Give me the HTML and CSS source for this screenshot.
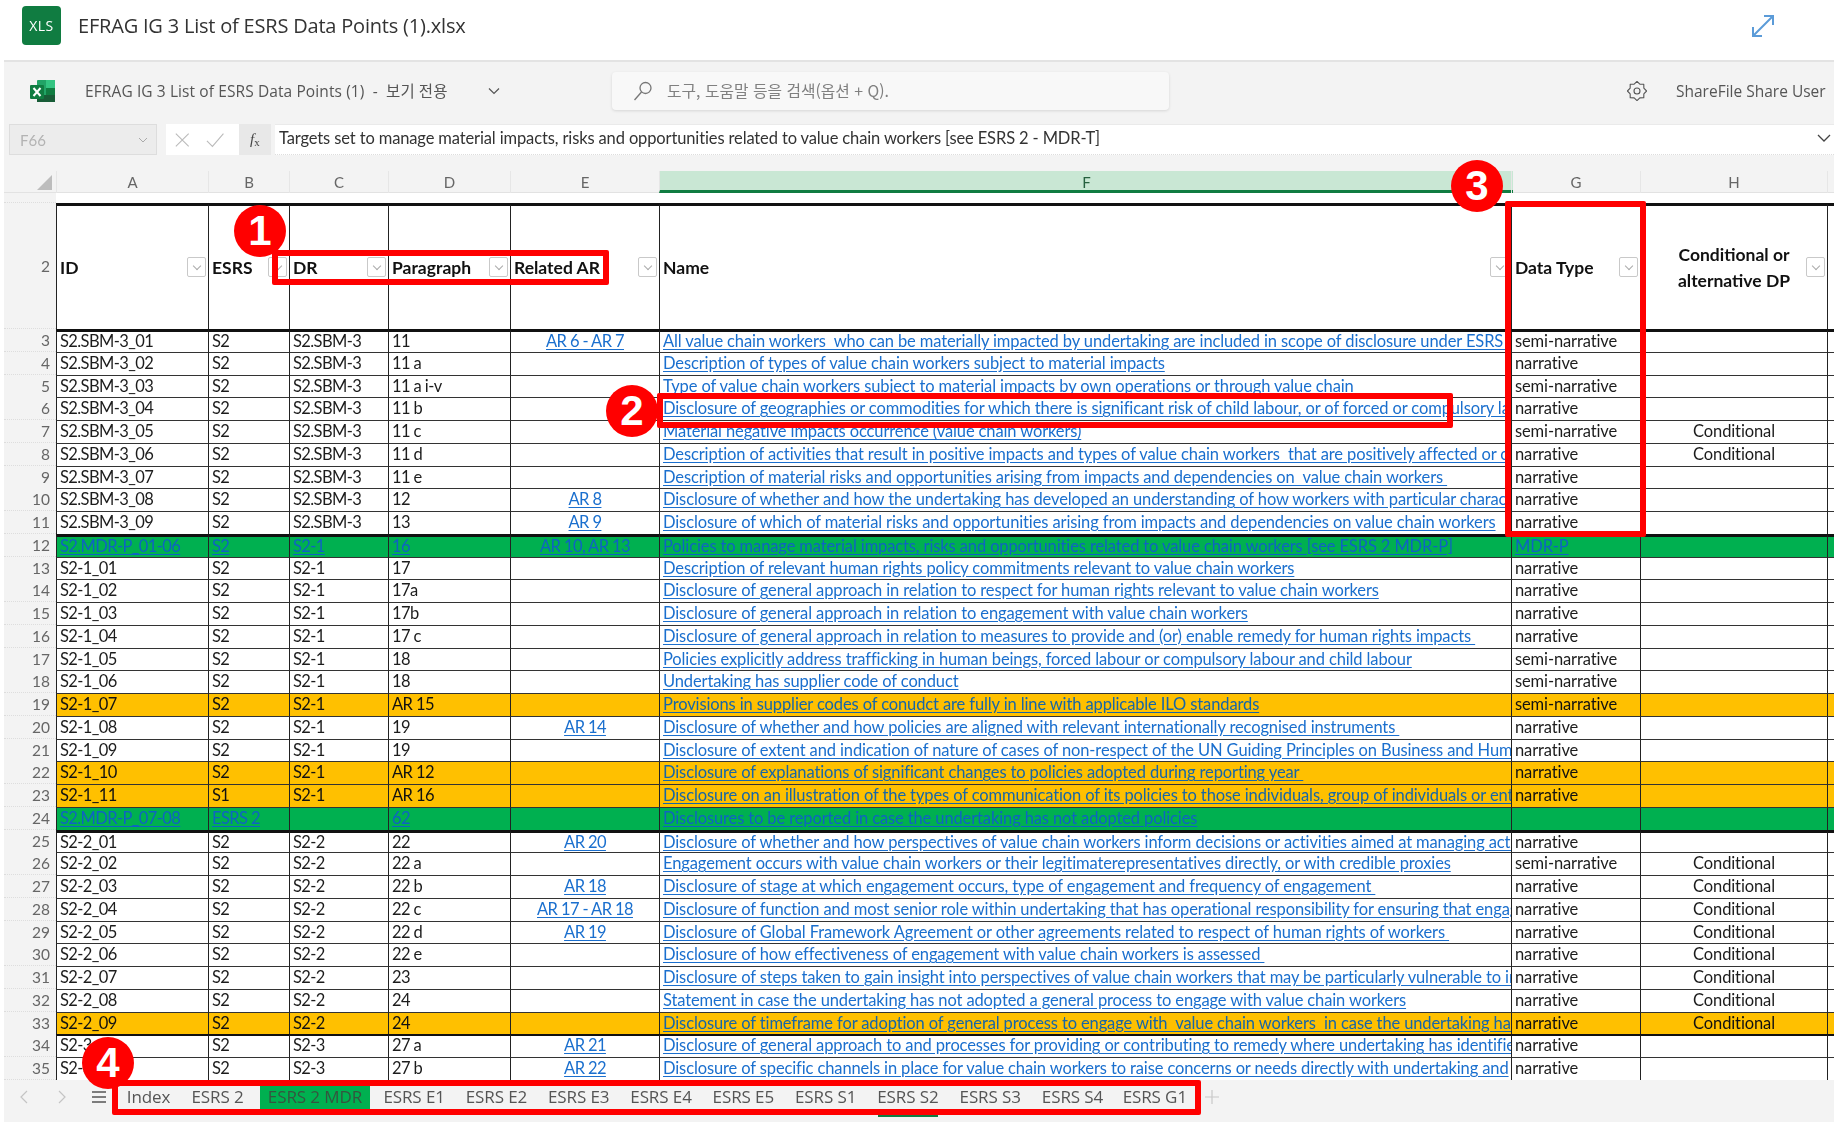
FILE: index.html
```html
<!DOCTYPE html>
<html lang="ko">
<head>
<meta charset="utf-8">
<title>EFRAG IG 3 List of ESRS Data Points (1).xlsx</title>
<link rel="stylesheet" href="styles.css">
</head>
<body>
<div class="app">
  <header class="title">
    <div class="xls">XLS</div>
    <h1>EFRAG IG 3 List of ESRS Data Points (1).xlsx</h1>
    <svg class="expand" width="24" height="24" viewBox="0 0 24 24" fill="none" stroke="#5b9bd8" stroke-width="2"><path d="M2 22 22 2M13 2h9v9M2 13v9h9"/></svg>
  </header>
  <div class="toolbar">
    <svg class="xl" width="26" height="24" viewBox="0 0 26 24"><rect x="7" y="1" width="18" height="22" rx="1" fill="#21a366"/><rect x="16" y="1" width="9" height="8" fill="#33c481"/><rect x="16" y="9" width="9" height="7" fill="#107c41"/><rect x="7" y="16" width="18" height="7" fill="#185c37"/><rect x="0" y="6" width="14" height="14" rx="1" fill="#107c41"/><path d="M3.5 9 10.500 17M10.500 9 3.500 17" stroke="#fff" stroke-width="2"/></svg>
    <span class="doc">EFRAG IG 3 List of ESRS Data Points (1)&nbsp; -&nbsp; 보기 전용</span>
    <svg class="caret" width="12" height="8" viewBox="0 0 12 8" fill="none" stroke="#555" stroke-width="1.200"><path d="M1 1.500 6 6.500 11 1.500"/></svg>
    <div class="search">
      <svg width="20" height="20" viewBox="0 0 20 20" fill="none" stroke="#777" stroke-width="1.300"><circle cx="12.500" cy="7" r="5.500"/><path d="M8.500 11 1.500 19"/></svg>
      <span>도구, 도움말 등을 검색(옵션 + Q).</span>
    </div>
    <svg class="gear" width="20" height="20" viewBox="0 0 20 20" fill="none" stroke="#555" stroke-width="1.100" stroke-linejoin="round"><path d="M19.600 10 16.840 12.830 16.790 16.790 12.830 16.840 10 19.600 7.170 16.840 3.210 16.790 3.160 12.830.4 10 3.160 7.170 3.210 3.210 7.170 3.160 10 .4 12.830 3.160 16.790 3.210 16.840 7.170Z"/><circle cx="10" cy="10" r="3"/></svg>
    <span class="user">ShareFile Share User</span>
  </div>
  <div class="formula">
    <div class="namebox"><span>F66</span><svg width="10" height="6" viewBox="0 0 10 6" fill="none" stroke="#aaa"><path d="M1 1 5 5 9 1"/></svg></div>
    <div class="fbtns">
      <svg width="18" height="18" viewBox="0 0 18 18" fill="none" stroke="#bbb" stroke-width="1.200"><path d="M2 2 16 16M16 2 2 16"/></svg>
      <svg width="20" height="18" viewBox="0 0 20 18" fill="none" stroke="#bbb" stroke-width="1.200"><path d="M1 10 7 16 19 2"/></svg>
      <span class="fx"><i>f</i><small>x</small></span>
    </div>
    <div class="finput"><span>Targets set to manage material impacts, risks and opportunities related to value chain workers [see ESRS 2 - MDR-T]</span>
      <svg width="14" height="8" viewBox="0 0 14 8" fill="none" stroke="#444" stroke-width="1.300"><path d="M1 1 7 7 13 1"/></svg></div>
  </div>
  <main class="sheet">
    <div class="grid colhead">
      <span class="corner"></span><span>A</span><span>B</span><span>C</span><span>D</span><span>E</span><span class="sel">F</span><span>G</span><span>H</span><span></span>
    </div>
    <div class="grid row1"><span class="rh"></span><span></span><span></span><span></span><span></span><span></span><span></span><span></span><span></span><span></span></div>
    <div class="grid row2">
      <span class="rh">2</span>
      <span class="c"><b>ID</b><u class="fb"></u></span>
      <span class="c"><b>ESRS</b><u class="fb"></u></span>
      <span class="c"><b>DR</b><u class="fb"></u></span>
      <span class="c"><b>Paragraph</b><u class="fb"></u></span>
      <span class="c"><b>Related AR</b><u class="fb"></u></span>
      <span class="c"><b>Name</b><u class="fb"></u></span>
      <span class="c"><b>Data Type</b><u class="fb"></u></span>
      <span class="c hc"><b>Conditional or<br>alternative DP</b><u class="fb"></u></span>
      <span class="c"></span>
    </div>
    <div class="grid row thick"><span class="rh">3</span><span class="c">S2.SBM-3_01</span><span class="c">S2</span><span class="c">S2.SBM-3</span><span class="c">11</span><span class="c m"><a>AR 6 - AR 7</a></span><span class="c"><a>All value chain workers  who can be materially impacted by undertaking are included in scope of disclosure under ESRS 2</a></span><span class="c">semi-narrative</span><span class="c m"></span><span class="c"></span></div>
    <div class="grid row"><span class="rh">4</span><span class="c">S2.SBM-3_02</span><span class="c">S2</span><span class="c">S2.SBM-3</span><span class="c">11 a</span><span class="c m"></span><span class="c"><a>Description of types of value chain workers subject to material impacts</a></span><span class="c">narrative</span><span class="c m"></span><span class="c"></span></div>
    <div class="grid row"><span class="rh">5</span><span class="c">S2.SBM-3_03</span><span class="c">S2</span><span class="c">S2.SBM-3</span><span class="c">11 a i-v</span><span class="c m"></span><span class="c"><a>Type of value chain workers subject to material impacts by own operations or through value chain</a></span><span class="c">semi-narrative</span><span class="c m"></span><span class="c"></span></div>
    <div class="grid row"><span class="rh">6</span><span class="c">S2.SBM-3_04</span><span class="c">S2</span><span class="c">S2.SBM-3</span><span class="c">11 b</span><span class="c m"></span><span class="c"><a>Disclosure of geographies or commodities for which there is significant risk of child labour, or of forced or compulsory labour</a></span><span class="c">narrative</span><span class="c m"></span><span class="c"></span></div>
    <div class="grid row"><span class="rh">7</span><span class="c">S2.SBM-3_05</span><span class="c">S2</span><span class="c">S2.SBM-3</span><span class="c">11 c</span><span class="c m"></span><span class="c"><a>Material negative impacts occurrence (value chain workers)</a></span><span class="c">semi-narrative</span><span class="c m">Conditional</span><span class="c"></span></div>
    <div class="grid row"><span class="rh">8</span><span class="c">S2.SBM-3_06</span><span class="c">S2</span><span class="c">S2.SBM-3</span><span class="c">11 d</span><span class="c m"></span><span class="c"><a>Description of activities that result in positive impacts and types of value chain workers  that are positively affected or could be</a></span><span class="c">narrative</span><span class="c m">Conditional</span><span class="c"></span></div>
    <div class="grid row"><span class="rh">9</span><span class="c">S2.SBM-3_07</span><span class="c">S2</span><span class="c">S2.SBM-3</span><span class="c">11 e</span><span class="c m"></span><span class="c"><a>Description of material risks and opportunities arising from impacts and dependencies on  value chain workers </a></span><span class="c">narrative</span><span class="c m"></span><span class="c"></span></div>
    <div class="grid row"><span class="rh">10</span><span class="c">S2.SBM-3_08</span><span class="c">S2</span><span class="c">S2.SBM-3</span><span class="c">12</span><span class="c m"><a>AR 8</a></span><span class="c"><a>Disclosure of whether and how the undertaking has developed an understanding of how workers with particular characteristics</a></span><span class="c">narrative</span><span class="c m"></span><span class="c"></span></div>
    <div class="grid row"><span class="rh">11</span><span class="c">S2.SBM-3_09</span><span class="c">S2</span><span class="c">S2.SBM-3</span><span class="c">13</span><span class="c m"><a>AR 9</a></span><span class="c"><a>Disclosure of which of material risks and opportunities arising from impacts and dependencies on value chain workers</a></span><span class="c">narrative</span><span class="c m"></span><span class="c"></span></div>
    <div class="grid row g thick"><span class="rh">12</span><span class="c"><a>S2.MDR-P_01-06</a></span><span class="c"><a>S2</a></span><span class="c"><a>S2-1</a></span><span class="c"><a>16</a></span><span class="c m"><a>AR 10, AR 13</a></span><span class="c"><a>Policies to manage material impacts, risks and opportunities related to value chain workers [see ESRS 2 MDR-P]</a></span><span class="c"><a>MDR-P</a></span><span class="c m"></span><span class="c"></span></div>
    <div class="grid row"><span class="rh">13</span><span class="c">S2-1_01</span><span class="c">S2</span><span class="c">S2-1</span><span class="c">17</span><span class="c m"></span><span class="c"><a>Description of relevant human rights policy commitments relevant to value chain workers</a></span><span class="c">narrative</span><span class="c m"></span><span class="c"></span></div>
    <div class="grid row"><span class="rh">14</span><span class="c">S2-1_02</span><span class="c">S2</span><span class="c">S2-1</span><span class="c">17a</span><span class="c m"></span><span class="c"><a>Disclosure of general approach in relation to respect for human rights relevant to value chain workers</a></span><span class="c">narrative</span><span class="c m"></span><span class="c"></span></div>
    <div class="grid row"><span class="rh">15</span><span class="c">S2-1_03</span><span class="c">S2</span><span class="c">S2-1</span><span class="c">17b</span><span class="c m"></span><span class="c"><a>Disclosure of general approach in relation to engagement with value chain workers</a></span><span class="c">narrative</span><span class="c m"></span><span class="c"></span></div>
    <div class="grid row"><span class="rh">16</span><span class="c">S2-1_04</span><span class="c">S2</span><span class="c">S2-1</span><span class="c">17 c</span><span class="c m"></span><span class="c"><a>Disclosure of general approach in relation to measures to provide and (or) enable remedy for human rights impacts </a></span><span class="c">narrative</span><span class="c m"></span><span class="c"></span></div>
    <div class="grid row"><span class="rh">17</span><span class="c">S2-1_05</span><span class="c">S2</span><span class="c">S2-1</span><span class="c">18</span><span class="c m"></span><span class="c"><a>Policies explicitly address trafficking in human beings, forced labour or compulsory labour and child labour</a></span><span class="c">semi-narrative</span><span class="c m"></span><span class="c"></span></div>
    <div class="grid row"><span class="rh">18</span><span class="c">S2-1_06</span><span class="c">S2</span><span class="c">S2-1</span><span class="c">18</span><span class="c m"></span><span class="c"><a>Undertaking has supplier code of conduct</a></span><span class="c">semi-narrative</span><span class="c m"></span><span class="c"></span></div>
    <div class="grid row o"><span class="rh">19</span><span class="c">S2-1_07</span><span class="c">S2</span><span class="c">S2-1</span><span class="c">AR 15</span><span class="c m"></span><span class="c"><a>Provisions in supplier codes of conudct are fully in line with applicable ILO standards</a></span><span class="c">semi-narrative</span><span class="c m"></span><span class="c"></span></div>
    <div class="grid row"><span class="rh">20</span><span class="c">S2-1_08</span><span class="c">S2</span><span class="c">S2-1</span><span class="c">19</span><span class="c m"><a>AR 14</a></span><span class="c"><a>Disclosure of whether and how policies are aligned with relevant internationally recognised instruments </a></span><span class="c">narrative</span><span class="c m"></span><span class="c"></span></div>
    <div class="grid row"><span class="rh">21</span><span class="c">S2-1_09</span><span class="c">S2</span><span class="c">S2-1</span><span class="c">19</span><span class="c m"></span><span class="c"><a>Disclosure of extent and indication of nature of cases of non-respect of the UN Guiding Principles on Business and Human Rights</a></span><span class="c">narrative</span><span class="c m"></span><span class="c"></span></div>
    <div class="grid row o"><span class="rh">22</span><span class="c">S2-1_10</span><span class="c">S2</span><span class="c">S2-1</span><span class="c">AR 12</span><span class="c m"></span><span class="c"><a>Disclosure of explanations of significant changes to policies adopted during reporting year </a></span><span class="c">narrative</span><span class="c m"></span><span class="c"></span></div>
    <div class="grid row o"><span class="rh">23</span><span class="c">S2-1_11</span><span class="c">S1</span><span class="c">S2-1</span><span class="c">AR 16</span><span class="c m"></span><span class="c"><a>Disclosure on an illustration of the types of communication of its policies to those individuals, group of individuals or entities</a></span><span class="c">narrative</span><span class="c m"></span><span class="c"></span></div>
    <div class="grid row g"><span class="rh">24</span><span class="c"><a>S2.MDR-P_07-08</a></span><span class="c"><a>ESRS 2</a></span><span class="c"></span><span class="c"><a>62</a></span><span class="c m"></span><span class="c"><a>Disclosures to be reported in case the undertaking has not adopted policies</a></span><span class="c"></span><span class="c m"></span><span class="c"></span></div>
    <div class="grid row thick"><span class="rh">25</span><span class="c">S2-2_01</span><span class="c">S2</span><span class="c">S2-2</span><span class="c">22</span><span class="c m"><a>AR 20</a></span><span class="c"><a>Disclosure of whether and how perspectives of value chain workers inform decisions or activities aimed at managing actual</a></span><span class="c">narrative</span><span class="c m"></span><span class="c"></span></div>
    <div class="grid row"><span class="rh">26</span><span class="c">S2-2_02</span><span class="c">S2</span><span class="c">S2-2</span><span class="c">22 a</span><span class="c m"></span><span class="c"><a>Engagement occurs with value chain workers or their legitimaterepresentatives directly, or with credible proxies</a></span><span class="c">semi-narrative</span><span class="c m">Conditional</span><span class="c"></span></div>
    <div class="grid row"><span class="rh">27</span><span class="c">S2-2_03</span><span class="c">S2</span><span class="c">S2-2</span><span class="c">22 b</span><span class="c m"><a>AR 18</a></span><span class="c"><a>Disclosure of stage at which engagement occurs, type of engagement and frequency of engagement </a></span><span class="c">narrative</span><span class="c m">Conditional</span><span class="c"></span></div>
    <div class="grid row"><span class="rh">28</span><span class="c">S2-2_04</span><span class="c">S2</span><span class="c">S2-2</span><span class="c">22 c</span><span class="c m"><a>AR 17 - AR 18</a></span><span class="c"><a>Disclosure of function and most senior role within undertaking that has operational responsibility for ensuring that engagement</a></span><span class="c">narrative</span><span class="c m">Conditional</span><span class="c"></span></div>
    <div class="grid row"><span class="rh">29</span><span class="c">S2-2_05</span><span class="c">S2</span><span class="c">S2-2</span><span class="c">22 d</span><span class="c m"><a>AR 19</a></span><span class="c"><a>Disclosure of Global Framework Agreement or other agreements related to respect of human rights of workers </a></span><span class="c">narrative</span><span class="c m">Conditional</span><span class="c"></span></div>
    <div class="grid row"><span class="rh">30</span><span class="c">S2-2_06</span><span class="c">S2</span><span class="c">S2-2</span><span class="c">22 e</span><span class="c m"></span><span class="c"><a>Disclosure of how effectiveness of engagement with value chain workers is assessed </a></span><span class="c">narrative</span><span class="c m">Conditional</span><span class="c"></span></div>
    <div class="grid row"><span class="rh">31</span><span class="c">S2-2_07</span><span class="c">S2</span><span class="c">S2-2</span><span class="c">23</span><span class="c m"></span><span class="c"><a>Disclosure of steps taken to gain insight into perspectives of value chain workers that may be particularly vulnerable to impacts</a></span><span class="c">narrative</span><span class="c m">Conditional</span><span class="c"></span></div>
    <div class="grid row"><span class="rh">32</span><span class="c">S2-2_08</span><span class="c">S2</span><span class="c">S2-2</span><span class="c">24</span><span class="c m"></span><span class="c"><a>Statement in case the undertaking has not adopted a general process to engage with value chain workers</a></span><span class="c">narrative</span><span class="c m">Conditional</span><span class="c"></span></div>
    <div class="grid row o"><span class="rh">33</span><span class="c">S2-2_09</span><span class="c">S2</span><span class="c">S2-2</span><span class="c">24</span><span class="c m"></span><span class="c"><a>Disclosure of timeframe for adoption of general process to engage with  value chain workers  in case the undertaking has not</a></span><span class="c">narrative</span><span class="c m">Conditional</span><span class="c"></span></div>
    <div class="grid row mid"><span class="rh">34</span><span class="c">S2-3_01</span><span class="c">S2</span><span class="c">S2-3</span><span class="c">27 a</span><span class="c m"><a>AR 21</a></span><span class="c"><a>Disclosure of general approach to and processes for providing or contributing to remedy where undertaking has identified that</a></span><span class="c">narrative</span><span class="c m"></span><span class="c"></span></div>
    <div class="grid row"><span class="rh">35</span><span class="c">S2-3_02</span><span class="c">S2</span><span class="c">S2-3</span><span class="c">27 b</span><span class="c m"><a>AR 22</a></span><span class="c"><a>Disclosure of specific channels in place for value chain workers to raise concerns or needs directly with undertaking and</a></span><span class="c">narrative</span><span class="c m"></span><span class="c"></span></div>
  </main>
  <nav class="tabs">
    <div class="tnav">
      <svg width="9" height="14" viewBox="0 0 9 14" fill="none" stroke="#c4c4c4" stroke-width="1.200"><path d="M8 1 2 7 8 13"/></svg>
      <svg width="9" height="14" viewBox="0 0 9 14" fill="none" stroke="#c4c4c4" stroke-width="1.200"><path d="M1 1 7 7 1 13"/></svg>
      <svg class="burger" width="14" height="12" viewBox="0 0 14 12" fill="none" stroke="#555" stroke-width="1.400"><path d="M0 1h14M0 6h14M0 11h14"/></svg>
    </div>
    <span class="tab">Index</span><span class="tab">ESRS 2</span><span class="tab mdr">ESRS 2 MDR</span><span class="tab">ESRS E1</span><span class="tab">ESRS E2</span><span class="tab">ESRS E3</span><span class="tab">ESRS E4</span><span class="tab">ESRS E5</span><span class="tab">ESRS S1</span><span class="tab cur">ESRS S2</span><span class="tab">ESRS S3</span><span class="tab">ESRS S4</span><span class="tab">ESRS G1</span>
    <svg class="plus" width="14" height="14" viewBox="0 0 14 14" stroke="#c8c8c8" stroke-width="1.200"><path d="M7 0v14M0 7h14"/></svg>
  </nav>
</div>
<div class="box b1"></div>
<div class="box b2"></div>
<div class="box b3"></div>
<div class="box b4"></div>
<div class="badge n1">1</div>
<div class="badge n2">2</div>
<div class="badge n3">3</div>
<div class="badge n4">4</div>
</body>
</html>
```
FILE: styles.css
```css
* { box-sizing: border-box; }
html, body { margin: 0; height: 100%; }
body { background: #fff; position: relative; overflow: hidden; font-family: "Lato", "Noto Sans CJK KR", sans-serif; }
.app { margin-left: 4px; width: 1830px; height: 1122px; background: #f3f3f3; display: flex; flex-direction: column; filter: blur(.45px); }

.title { height: 62px; flex: none; background: #fff; border-bottom: 2px solid #e3e3e3; display: flex; align-items: center; padding: 0 0 9px 18px; }
.xls { width: 39px; height: 39px; border-radius: 4px; background: #107c41; color: #fff; font: 14px/39px "Open Sans", sans-serif; letter-spacing: .5px; text-align: center; }
.title h1 { margin: 0 0 0 17px; font: 400 20px "Open Sans", sans-serif; letter-spacing: -.2px; color: #333; flex: 1; }
.expand { margin-right: 59px; }

.toolbar { height: 57px; flex: none; display: flex; align-items: center; padding-left: 26px; color: #555; }
.xl { flex: none; }
.doc { margin-left: 29px; font: 15.5px "Open Sans", "Noto Sans CJK KR", sans-serif; letter-spacing: .1px; width: 410px; white-space: nowrap; flex: none; }
.caret { margin-left: -7px; flex: none; }
.search { margin-left: 112px; width: 557px; flex: none; height: 38px; background: #f8f8f8; border-radius: 4px; box-shadow: 0 1px 3px rgba(0,0,0,.12); display: flex; align-items: center; gap: 14px; padding-left: 21px; font: 15.8px "Noto Sans CJK KR", sans-serif; color: #808080; }
.gear { margin-left: 458px; flex: none; }
.user { margin-left: 29px; font: 15.5px "Open Sans", sans-serif; white-space: nowrap; color: #555; }

.formula { height: 31px; flex: none; margin: 5px 0 16px; display: flex; padding-left: 5px; font-size: 15px; color: #333; }
.namebox { width: 148px; background: #ececec; border: 1px solid #ddd; display: flex; align-items: center; justify-content: space-between; padding: 0 8px 0 10px; color: #b3b3b3; }
.fbtns { margin-left: 9px; width: 105px; background: #fff; display: flex; align-items: center; padding-left: 8px; gap: 15px; }
.fx { margin-left: auto; width: 35px; height: 100%; background: #e8e8e8; display: flex; align-items: center; justify-content: center; font: 15px "Liberation Serif", serif; color: #444; }
.fx small { font-size: 11px; margin-top: 5px; }
.finput { margin-left: 4px; flex: 1; background: #fff; border-top: 1px solid #eaeaea; border-bottom: 1px dotted #ddd; display: flex; align-items: center; justify-content: space-between; padding: 0 3px 3px 4px; font-size: 16.5px; letter-spacing: -.13px; }

.sheet { flex: none; height: 909px; display: flex; flex-direction: column; background: #fff; overflow: hidden; }
.grid { display: grid; grid-template-columns: 52px 152px 81px 99px 122px 149px 852px 129px 187px 7px; flex: none; }
.colhead { height: 22px; background: #f3f3f3; font-size: 15px; color: #666; text-align: center; line-height: 22px; border-bottom: 1px solid #e2e2e2; }
.colhead span { border-left: 1px solid #e6e6e6; }
.corner { position: relative; border-left: 0 !important; }
.corner::after { content: ""; position: absolute; right: 4px; bottom: 3px; border-style: solid; border-width: 0 0 15px 15px; border-color: transparent transparent #bdbdbd transparent; }
.colhead .sel { background: #c9e7d4; border-bottom: 3px solid #107c41; color: #26603f; margin-right: -2px; height: 22px; }
.row1 { height: 10px; }
.row2 { height: 126px; }
.row { height: 22.75px; font-size: 16.5px; color: #1c1c1c; line-height: 21px; }
.rh { background: #f3f3f3; color: #666; text-align: right; padding-right: 6px; font-size: 15.5px; border-bottom: 1px dotted #ddd; }
.row .rh { padding-top: 1px; }
.row2 .rh { display: flex; align-items: center; justify-content: flex-end; }
.c { border-left: 1px solid #222; border-top: 1px solid #333; padding: 0 3px; white-space: pre; overflow: hidden; min-width: 0; letter-spacing: -.12px; }
.row .c:nth-child(-n+6) { letter-spacing: -.6px; }
.thick .c, .row2 .c { border-top: 3px solid #111; }
.thick .c { line-height: 19px; }
.mid .c { border-top: 2px solid #111; line-height: 19px; }
.c a { color: #1a6fce; text-decoration: underline; text-underline-offset: 2px; }
.m { text-align: center; }
.row2 .c { display: flex; align-items: center; justify-content: space-between; font-size: 17.5px; color: #111; padding: 0 2px 0 3px; }
.row2 .c b { font-weight: 700; letter-spacing: 0; }
.row2 .hc b { flex: 1; text-align: center; line-height: 26px; padding-left: 18px; font-weight: 700; }
.fb { flex: none; width: 19px; height: 20px; background: #fff; border: 1px solid #c9c9c9; border-radius: 2px; position: relative; margin-bottom: 2px; text-decoration: none; }
.fb::after { content: ""; position: absolute; left: 6px; top: 5px; width: 5px; height: 5px; border: solid #aaa; border-width: 0 1px 1px 0; transform: rotate(45deg); }
.g { background: linear-gradient(90deg, #f3f3f3 52px, #00b050 52px); }
.o { background: linear-gradient(90deg, #f3f3f3 52px, #ffc000 52px); color: #111; }
.g .c a { color: #0f62c4; }
.o .c a { color: #1666a8; }

.tabs { flex: 1; display: flex; align-items: flex-start; padding-top: 5px; color: #555; font: 17px/24px "Open Sans", sans-serif; }
.tnav { width: 111px; flex: none; height: 24px; padding-left: 15px; display: flex; align-items: center; gap: 30px; }
.tnav .burger { margin-left: -5px; }
.tab { flex: none; white-space: nowrap; letter-spacing: -.1px; height: 24px; width: 82.300px; display: flex; justify-content: center; }
.tab:nth-of-type(1) { width: 59px; margin-left: 4px; }
.tab:nth-of-type(2) { width: 79px; }
.tab:nth-of-type(3) { width: 110px; }
.tab:nth-of-type(4) { margin-left: 3px; }
.mdr { background: #00b050; color: #35553f; margin-left: 3px; }
.cur { position: relative; }
.cur::after { content: ""; position: absolute; left: 11px; right: 11px; top: 30px; height: 2px; background: #107c41; }
.plus { margin: 5px 0 0 9px; flex: none; }

.box { position: absolute; border: 6px solid #f00; border-radius: 2px; }
.b1 { left: 272px; top: 250px; width: 337px; height: 35px; }
.b2 { left: 657px; top: 393px; width: 796px; height: 35px; }
.b3 { left: 1505px; top: 201px; width: 141px; height: 336px; }
.b4 { left: 112px; top: 1080px; width: 1089px; height: 35px; }
.badge { position: absolute; width: 52px; height: 52px; border-radius: 50%; background: #f00; color: #fff; font: 700 42px/52px "Liberation Sans", sans-serif; text-align: center; }
.n1 { left: 234px; top: 205px; }
.n2 { left: 606px; top: 385px; }
.n3 { left: 1451px; top: 160px; }
.n4 { left: 82px; top: 1037px; }
```
